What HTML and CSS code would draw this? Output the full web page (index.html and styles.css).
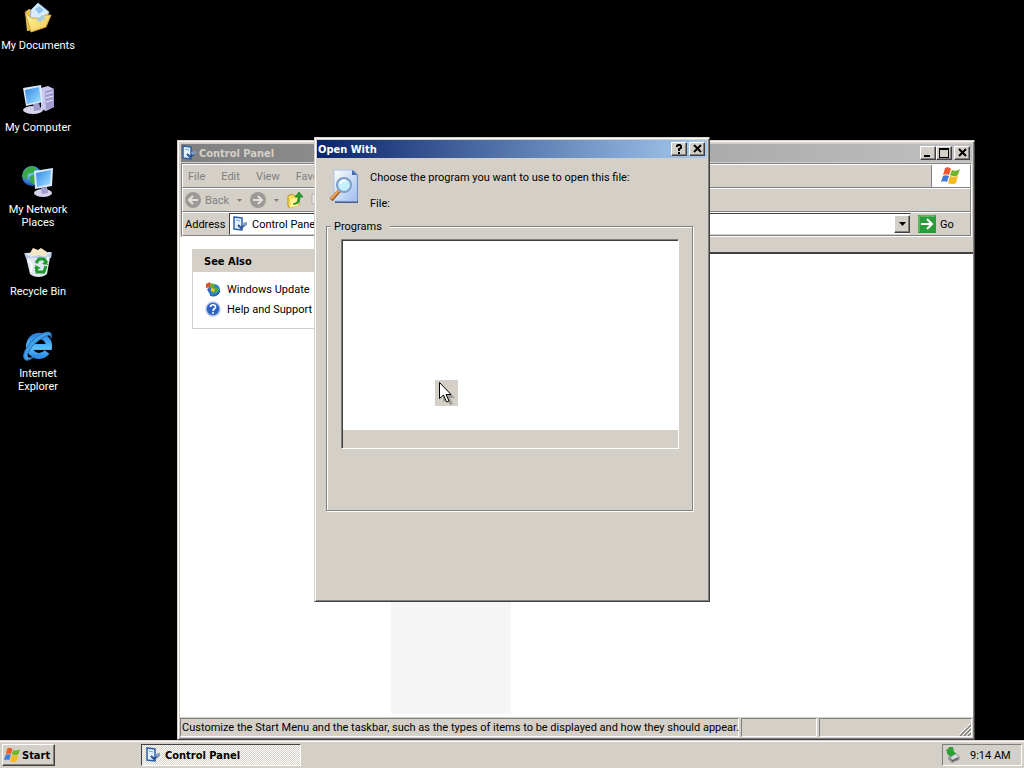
FILE: index.html
```html
<!DOCTYPE html>
<html lang="en">
<head>
  <meta charset="UTF-8">
  <title>Desktop</title>
  <link rel="stylesheet" href="styles.css">
</head>
<body>

<!-- shared icons -->
<svg class="defs" aria-hidden="true">
  <defs>
    <linearGradient id="screen" x1="0" y1="0" x2="1" y2="1">
      <stop offset="0" stop-color="#2f86e8"/>
      <stop offset="1" stop-color="#a4e4ff"/>
    </linearGradient>
    <linearGradient id="folder" x1="0" y1="0" x2="1" y2="1">
      <stop offset="0" stop-color="#fff6a8"/>
      <stop offset="1" stop-color="#f0c850"/>
    </linearGradient>
    <linearGradient id="paper" x1="0" y1="0" x2="1" y2="1">
      <stop offset="0" stop-color="#ffffff"/>
      <stop offset="1" stop-color="#9dbdf0"/>
    </linearGradient>
    <radialGradient id="globe" cx="0.4" cy="0.3" r="0.7">
      <stop offset="0" stop-color="#8fe0ff"/>
      <stop offset="1" stop-color="#1450b8"/>
    </radialGradient>
    <linearGradient id="ie" x1="0" y1="0" x2="0" y2="1">
      <stop offset="0" stop-color="#2a8ae6"/>
      <stop offset="0.6" stop-color="#5cc0fa"/>
      <stop offset="1" stop-color="#2f8fe6"/>
    </linearGradient>
    <symbol id="cpanel" viewBox="0 0 16 16">
      <path d="M2 1l8 1v12l-8-1z" fill="#e4f1ff" stroke="#2a5fa8" stroke-width="1.5"/>
      <path d="M4 4l4 1" stroke="#6fa6e0"/>
      <path d="M6 9l3 3 5-4" fill="none" stroke="#274f8c" stroke-width="2"/>
      <path d="M10 7l5-1v3l-4 1z" fill="#7f9dc0"/>
    </symbol>
    <symbol id="flag" viewBox="0 0 20 18">
      <path d="M4 1c2-1 4-1 6 1L8 8C6 7 4 7 2 8z" fill="#ee5a2c"/>
      <path d="M11 3c2 1 5 1 8-1l-2 6c-3 2-6 1-8 0z" fill="#6fb52e"/>
      <path d="M2 9c2-1 4-1 6 0l-2 6c-2-1-4-1-6 0z" fill="#3f78d8"/>
      <path d="M9 9c2 1 5 1 8 0l-2 7c-3 2-6 1-8 0z" fill="#f6bb22"/>
    </symbol>
  </defs>
</svg>

<main class="desktop">
  <nav class="icons">
    <a class="shortcut" href="#">
      <svg width="32" height="32" viewBox="0 0 32 32">
        <path d="M3 10l4-3 5 2v19l-7 1z" fill="#e9c253"/>
        <path d="M9 8l7-7 11 9-6 13-13-4z" fill="#d9edff" stroke="#8fb8e0"/>
        <path d="M13 7l4-3 5 4-5 4z" fill="#8fc4f2"/>
        <path d="M3 10l6 6h6l3 2 5-5 6 0-5 12-15 5z" fill="url(#folder)" stroke="#d0a23a"/>
        <path d="M14 18l6-5 4 3-6 4z" fill="#a9cdda"/>
      </svg>
      <span>My Documents</span>
    </a>
    <a class="shortcut" href="#">
      <svg width="32" height="32" viewBox="0 0 32 32">
        <path d="M19 4l7-2 6 3v18l-8 4-5-2z" fill="#c9c7ec"/>
        <path d="M23 7l9-2v18l-8 3z" fill="#a09ccf"/>
        <path d="M24 10l7-2M24 14l7-2M24 18l7-2" stroke="#eeeeff"/>
        <ellipse cx="11" cy="26" rx="10" ry="4" fill="#d5d3ec"/>
        <path d="M11 20l6-1 2 7-7 1z" fill="#9e9ccb"/>
        <path d="M1 4L19 1l2 17L4 22z" fill="#dce8fb"/>
        <path d="M3 6L17 3l2 14L5 20z" fill="url(#screen)"/>
      </svg>
      <span>My Computer</span>
    </a>
    <a class="shortcut" href="#">
      <svg width="32" height="32" viewBox="0 0 32 32">
        <circle cx="10" cy="10" r="10" fill="url(#globe)"/>
        <path d="M3 4c4-5 9-4 11-1l-3 4-5 1-1 5-4-1c-1-3 0-6 2-8zM8 10l6-2 2 5-4 6-4-3z" fill="#39a845"/>
        <ellipse cx="21" cy="27" rx="9" ry="4" fill="#d5d3ec"/>
        <path d="M19 22l6-1 1 6-6 1z" fill="#9e9ccb"/>
        <path d="M12 5L31 2l-1 18-17 3z" fill="#dce8fb"/>
        <path d="M14 7L29 4l-1 14-13 3z" fill="url(#screen)"/>
      </svg>
      <span>My Network Places</span>
    </a>
    <a class="shortcut" href="#">
      <svg width="32" height="32" viewBox="0 0 32 32">
        <path d="M3 5l26-1-4 22c-4 4-13 4-17 0z" fill="#dfe6f2"/>
        <path d="M8 5l3-5 5 2 3-2 6 4-2 4H10z" fill="#f3e7c4"/>
        <path d="M2 5l7 4 8-2 6 2 7-5-1 6H4z" fill="#b9cbe6"/>
        <path d="M6 12l4 4-1 8M26 9l-3 16" fill="none" stroke="#fff" stroke-width="2"/>
        <path d="M14 15l3-4h5l3 4" fill="none" stroke="#1f9a2c" stroke-width="3"/>
        <path d="M24 12l2 5-6-1zM14 22l-1-5 6 3z" fill="#1f9a2c"/>
        <path d="M24 18l-2 6h-4M14 19l1 5h3" fill="none" stroke="#1f9a2c" stroke-width="3"/>
      </svg>
      <span>Recycle Bin</span>
    </a>
    <a class="shortcut" href="#">
      <svg width="32" height="32" viewBox="0 0 32 32">
        <path d="M25 22A10 10 0 1 1 27 17H10" fill="none" stroke="url(#ie)" stroke-width="6"/>
        <path d="M29 8c2-8-5-7-13-2C7 12 0 23 2 28c1 4 6 2 10-1-8 3-8-2-3-9C14 11 30 0 29 8z" fill="#3f9fe8" stroke="#2b6fae"/>
      </svg>
      <span>Internet Explorer</span>
    </a>
  </nav>

  <section class="window explorer">
    <header class="titlebar inactive">
      <svg width="16" height="16"><use href="#cpanel"/></svg>
      <h1>Control Panel</h1>
      <div class="controls">
        <button aria-label="Minimize"><svg width="12" height="10"><path d="M2 7h6v2H2z"/></svg></button>
        <button aria-label="Maximize"><svg width="12" height="10"><path d="M1 0h10v10H1zM2 2v7h8V2z" fill-rule="evenodd"/></svg></button>
        <button aria-label="Close" class="close"><svg width="12" height="10"><path d="M3 1l7 7M10 1L3 8" stroke="#000" stroke-width="2"/></svg></button>
      </div>
    </header>

    <div class="rebar">
      <div class="band menu-band">
        <nav class="menu">
          <a href="#">File</a><a href="#">Edit</a><a href="#">View</a><a href="#">Favorites</a>
        </nav>
        <div class="throbber"><svg width="20" height="18"><use href="#flag"/></svg></div>
      </div>

      <div class="band toolbar">
        <button class="tool">
          <svg width="16" height="16" viewBox="0 0 16 16"><circle cx="8" cy="8" r="8" fill="#9c9a96"/><path d="M13 8H4M8 4L4 8l4 4" fill="none" stroke="#e4e1dc" stroke-width="2"/></svg>
          Back
        </button>
        <svg class="drop" width="5" height="3"><path d="M0 0h5L2.5 3z"/></svg>
        <button class="tool" aria-label="Forward">
          <svg width="16" height="16" viewBox="0 0 16 16"><circle cx="8" cy="8" r="8" fill="#9c9a96"/><path d="M3 8h9M8 4l4 4-4 4" fill="none" stroke="#e4e1dc" stroke-width="2"/></svg>
        </button>
        <svg class="drop" width="5" height="3"><path d="M0 0h5L2.5 3z"/></svg>
        <button class="tool" aria-label="Up">
          <svg width="16" height="18" viewBox="0 0 16 18"><path d="M1 5l4-2 2 2h5v9l-9 3-2-2z" fill="#f7df5c" stroke="#b78f1c"/><path d="M4 8l9-1-2 8-8 2z" fill="#fff09a"/><path d="M6 13c4-1 5-3 5-7H8l4-5 4 5h-3c0 5-2 8-7 7z" fill="#27a32d" stroke="#0d6b18" stroke-width=".6"/></svg>
        </button>
        <button class="tool" aria-label="Search">
          <svg width="16" height="16" viewBox="0 0 16 16"><path d="M1 2h8v10H1z" fill="#eee" stroke="#aaa"/></svg>
        </button>
      </div>

      <div class="band address">
        <label for="address">Address</label>
        <div class="combo">
          <svg width="16" height="16"><use href="#cpanel"/></svg>
          <input id="address" type="text" value="Control Panel">
          <button aria-label="Show addresses"><svg width="7" height="4"><path d="M0 0h7L3.5 4z"/></svg></button>
        </div>
        <button class="go">
          <svg width="18" height="18" viewBox="0 0 18 18"><path d="M0 0h18v18H0z" fill="#2c9c3a"/><path d="M1 17V1h16" fill="none" stroke="#7fcf86"/><path d="M3 9h11M9 4l5 5-5 5" fill="none" stroke="#fff" stroke-width="2"/></svg>
          Go
        </button>
      </div>
    </div>

    <div class="view">
      <aside class="see-also">
        <h2>See Also</h2>
        <ul>
          <li>
            <svg width="16" height="16" viewBox="0 0 16 16"><circle cx="9" cy="9" r="6" fill="#2c7fd0"/><path d="M5 9c2-3 6-3 9-1-1 4-4 5-7 4z" fill="#3fae4a"/><path d="M1 3l4-2v5L1 7z" fill="#d8542a"/><path d="M5 2l5 1-1 5-4-1z" fill="#6da83a"/><path d="M2 8l3-1 1 4-3-1z" fill="#3a5fb8"/><path d="M6 7l4 1-1 3-3-1z" fill="#f0c030"/><path d="M5 14c3 2 8 1 10-4" fill="none" stroke="#173f8a"/></svg>
            <a href="#">Windows Update</a>
          </li>
          <li>
            <svg width="16" height="16" viewBox="0 0 16 16"><circle cx="8" cy="8" r="7" fill="#2f62c4" stroke="#b4c6ea" stroke-width="1.5"/><path d="M5.5 6c0-3 5-3 5 0 0 2-2.5 1.500-2.500 4" fill="none" stroke="#fff" stroke-width="1.7"/><circle cx="8" cy="12" r="1" fill="#fff"/></svg>
            <a href="#">Help and Support</a>
          </li>
        </ul>
      </aside>
      <div class="pane">
        <div class="strip"></div>
        <div class="ghost"></div>
      </div>
    </div>

    <footer class="statusbar">
      <p class="status-text">Customize the Start Menu and the taskbar, such as the types of items to be displayed and how they should appear.</p>
      <p class="status-mid"></p>
      <p class="status-end"><svg width="12" height="12"><path d="M1 12L12 1M5 12l7-7M9 12l3-3" stroke="#808080" stroke-width="1.5"/><path d="M0 11L11 0M4 11l8-8M8 11l4-4" stroke="#fff"/></svg></p>
    </footer>
  </section>

  <section class="window dialog" role="dialog" aria-labelledby="dialog-title">
    <header class="titlebar">
      <h1 id="dialog-title">Open With</h1>
      <div class="controls">
        <button aria-label="Help"><svg width="12" height="10"><path d="M4 3V2l1-1h2l1 1v2L6 5v2" fill="none" stroke="#000" stroke-width="2"/><path d="M5 8h2v2H5z"/></svg></button>
        <button aria-label="Close" class="close"><svg width="12" height="10"><path d="M3 1l7 7M10 1L3 8" stroke="#000" stroke-width="2"/></svg></button>
      </div>
    </header>
    <div class="dialog-body">
      <div class="intro">
        <svg width="32" height="36" viewBox="0 0 32 36">
          <path d="M5 2h18l5 5v28H5z" fill="#44618e"/>
          <path d="M4 2h18l5 5v26H4z" fill="url(#paper)" stroke="#a8c2ea"/>
          <path d="M22 2l5 5h-5z" fill="#3c6ab4"/>
          <path d="M9 23l-8 9" stroke="#a35a24" stroke-width="4"/>
          <path d="M9 22l-8 9" stroke="#f0a45c" stroke-width="2"/>
          <circle cx="14" cy="17" r="7" fill="#c4effc" stroke="#7d9cc8" stroke-width="2"/>
          <path d="M10 16c1-3 3-4 6-3" fill="none" stroke="#fff" stroke-width="2"/>
        </svg>
        <div>
          <p>Choose the program you want to use to open this file:</p>
          <p>File:</p>
        </div>
      </div>
      <fieldset>
        <legend>Programs</legend>
        <div class="listbox"><div class="list"></div></div>
      </fieldset>
    </div>
  </section>

  <div class="cursor">
    <svg width="23" height="26" viewBox="0 0 23 26">
      <path d="M8 6v16l4-3 3 6 3-1-3-6h5z" fill="#a09d98"/>
      <path d="M4.5 2.5v16l4-3.5 3 7 2.5-1-3-6.5h5z" fill="#fff" stroke="#000"/>
    </svg>
  </div>
</main>

<footer class="taskbar">
  <button class="start"><svg width="17" height="16" viewBox="0 0 20 18"><use href="#flag"/></svg>Start</button>
  <button class="task"><svg width="16" height="16"><use href="#cpanel"/></svg>Control Panel</button>
  <div class="tray">
    <svg width="16" height="16" viewBox="0 0 16 16"><path d="M4 9l7-3 4 4-1 3-7 3-4-4z" fill="#8b8d92"/><path d="M5 10l6-3 3 3-6 3z" fill="#d4d6da"/><path d="M7 14l6-3" stroke="#444"/><path d="M1 3l2-1 1-2h4l1 5 2 1-5 4-4-3V5z" fill="#2f9e33"/></svg>
    <time>9:14 AM</time>
  </div>
</footer>

</body>
</html>
```
FILE: styles.css
```css
* {
  box-sizing: border-box;
}

body {
  margin: 0;
  height: 100vh;
  display: flex;
  flex-direction: column;
  overflow: hidden;
  background: #000;
  color: #000;
  font: 11px/13px Tahoma, Roboto, sans-serif;
}

h1, h2, p, ul {
  margin: 0;
  padding: 0;
  font-size: 11px;
  list-style: none;
}

h1, h2, .start, .task {
  font-family: Tahoma, "DejaVu Sans Condensed", sans-serif;
  font-weight: bold;
}

a {
  color: inherit;
  text-decoration: none;
}

button, input {
  margin: 0;
  padding: 0;
  border: 0;
  background: none;
  color: inherit;
  font: inherit;
}

svg {
  display: block;
  flex: none;
}

.defs {
  position: absolute;
  width: 0;
  height: 0;
}

/* desktop */
.desktop {
  position: relative;
  flex: 1;
  min-height: 0;
}

.icons {
  display: flex;
  flex-direction: column;
  width: 76px;
  padding-top: 2px;
}

.shortcut {
  display: flex;
  flex-direction: column;
  align-items: center;
  gap: 5px;
  height: 82px;
  color: #fff;
  text-align: center;
}

/* windows */
.window {
  position: absolute;
  display: flex;
  flex-direction: column;
  background: #d4d0c8;
  border: 1px solid;
  border-color: #d4d0c8 #404040 #404040 #d4d0c8;
  box-shadow: inset 1px 1px #fff, inset -1px -1px #808080;
}

.titlebar {
  display: flex;
  align-items: center;
  height: 18px;
  padding: 0 2px 0 1px;
  background: linear-gradient(to right, #0a246a, #a6caf0);
  color: #fff;
}

.titlebar.inactive {
  padding-left: 0;
  gap: 2px;
  background: linear-gradient(to right, #808080, #c0c0c0);
  color: #d4d0c8;
}

.controls {
  display: flex;
  margin-left: auto;
}

.controls button {
  width: 16px;
  height: 14px;
  padding: 1px 1px 2px;
}

.controls .close {
  margin-left: 2px;
}

.controls button, .combo button, .start {
  background: #d4d0c8;
  border: 1px solid;
  border-color: #fff #404040 #404040 #fff;
  box-shadow: inset -1px -1px #808080;
}

.explorer {
  top: 140px;
  left: 177px;
  width: 798px;
  height: 600px;
  padding: 3px 1px 2px 2px;
}

.explorer .titlebar {
  margin: 0 1px;
}

.rebar {
  margin: 1px 1px 0;
  border: 1px solid;
  border-color: #808080 #fff #fff #808080;
}

.band {
  display: flex;
  align-items: center;
  height: 24px;
  border: 1px solid;
  border-color: #fff #808080 #808080 #fff;
}

.menu-band {
  padding-left: 5px;
  color: #808080;
}

.menu {
  display: flex;
  gap: 16px;
}

.throbber {
  display: flex;
  align-items: center;
  justify-content: center;
  align-self: stretch;
  width: 39px;
  margin-left: auto;
  background: #fff;
  border-left: 1px solid #808080;
}

.toolbar {
  gap: 8px;
  padding-left: 2px;
  color: #808080;
  fill: #808080;
}

.tool {
  display: flex;
  align-items: center;
  gap: 4px;
}

.address {
  padding-left: 2px;
}

.address label {
  width: 40px;
}

.combo {
  display: flex;
  align-items: center;
  flex: 1;
  height: 22px;
  margin: 0 7px 0 4px;
  padding: 0 0 0 2px;
  background: #fff;
  border: 1px solid;
  border-color: #404040 #d4d0c8 #d4d0c8 #404040;
}

.combo input {
  flex: 1;
  padding-left: 4px;
}

.combo button {
  display: flex;
  align-items: center;
  justify-content: center;
  width: 16px;
  height: 18px;
}

.go {
  display: flex;
  align-items: center;
  gap: 4px;
  width: 52px;
}

.view {
  display: flex;
  flex: 1;
  background: #fff;
}

.see-also {
  align-self: flex-start;
  width: 188px;
  margin: 12px 11px 12px 12px;
  border: 1px solid #d4d0c8;
}

.see-also h2 {
  padding: 5px 11px 4px;
  background: #d4d0c8;
}

.see-also ul {
  display: grid;
  gap: 4px;
  padding: 9px 12px 11px;
}

.see-also li {
  display: flex;
  align-items: center;
  gap: 6px;
}

.pane {
  flex: 1;
  display: flex;
  flex-direction: column;
  justify-content: space-between;
  padding-bottom: 3px;
}

.strip {
  height: 17px;
  background: #d4d0c8;
  border-bottom: 2px solid #404040;
}

.ghost {
  width: 120px;
  height: 120px;
  background: #f5f5f5;
}

.statusbar {
  display: flex;
  gap: 2px;
  height: 20px;
  padding: 1px 1px 0 0;
}

.statusbar p {
  border: 1px solid;
  border-color: #808080 #fff #fff #808080;
}

.statusbar .status-text {
  width: 559px;
  padding: 2px 0 0 1px;
  white-space: nowrap;
}

.status-mid {
  width: 76px;
}

.status-end {
  display: flex;
  align-items: flex-end;
  justify-content: flex-end;
  flex: 1;
}

/* open with dialog */
.dialog {
  top: 137px;
  left: 314px;
  width: 396px;
  height: 465px;
  padding: 2px;
}

.dialog-body {
  padding: 10px 14px 0 9px;
}

.intro {
  display: flex;
  gap: 8px;
  padding-left: 4px;
}

.intro p {
  margin-top: 3px;
}

.intro p + p {
  margin-top: 13px;
}

fieldset {
  height: 291px;
  margin: 10px 0 0;
  padding: 6px 13px 0 14px;
  border: 1px solid #808080;
  box-shadow: 1px 1px #fff, inset 1px 1px #fff;
}

legend {
  padding: 0 8px 0 3px;
  margin-left: -10px;
  background: #d4d0c8;
}

.listbox {
  height: 210px;
  border: 1px solid;
  border-color: #808080 #fff #fff #808080;
  box-shadow: inset 1px 1px #404040;
  padding: 1px 0 0 1px;
}

.list {
  height: 189px;
  background: #fff;
}

.cursor {
  position: absolute;
  top: 380px;
  left: 435px;
  background: #d4d0c8;
}

/* taskbar */
.taskbar {
  display: flex;
  align-items: center;
  height: 28px;
  padding: 2px 2px 0;
  background: #d4d0c8;
  box-shadow: inset 0 1px #d4d0c8, inset 0 2px #fff;
}

.start, .task {
  display: flex;
  align-items: center;
  height: 22px;
}

.start {
  gap: 1px;
  width: 53px;
  padding-left: 1px;
}

.task {
  gap: 4px;
  width: 160px;
  margin-left: 86px;
  padding-left: 3px;
  border: 1px solid;
  border-color: #404040 #fff #fff #404040;
  background: repeating-conic-gradient(#fff 0 25%, #d4d0c8 0 50%) 0 0 / 2px 2px;
}

.tray {
  display: flex;
  align-items: center;
  gap: 9px;
  height: 22px;
  width: 80px;
  margin-left: auto;
  padding-left: 2px;
  border: 1px solid;
  border-color: #808080 #fff #fff #808080;
  white-space: nowrap;
}
```
